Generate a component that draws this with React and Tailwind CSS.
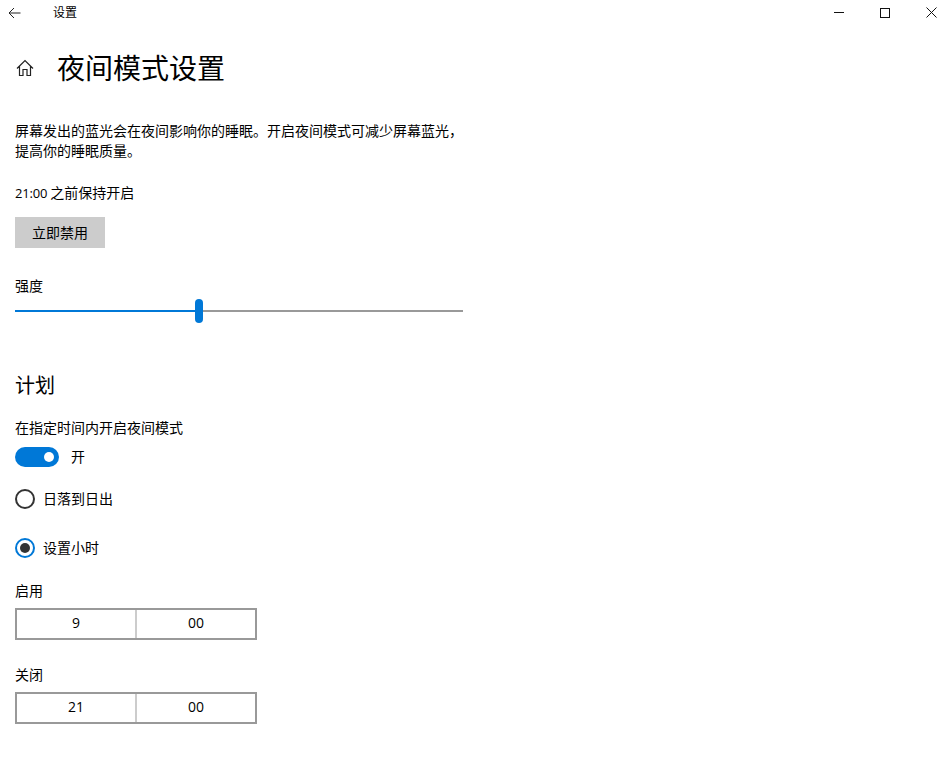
import React from "react";

const font = { fontFamily: '"Open Sans", "Noto Sans CJK SC", sans-serif' };

function TimePicker({ hour, minute }) {
  return (
    <div className="mt-[7px] flex h-[32px] w-[242px] border-2 border-[#999999] text-[14px] leading-[26px]">
      <div className="w-[120px] border-r-2 border-[#cccccc] text-center">{hour}</div>
      <div className="flex-1 text-center">{minute}</div>
    </div>
  );
}

export default function App() {
  return (
    <div className="relative h-[771px] w-[947px] overflow-hidden bg-white text-[14px] text-black" style={font}>
      <div className="flex h-[25px] items-center">
        <div className="flex w-[53px] justify-start pl-[8px]">
          <svg width="13" height="12" viewBox="0 0 13 12" fill="none" stroke="#222" strokeWidth="1">
            <path d="M12.5 6H1M6 1 1 6l5 5" />
          </svg>
        </div>
        <div className="text-[12px] leading-[25px]">设置</div>
        <div className="ml-auto flex items-center">
          <div className="flex w-[46px] justify-center">
            <div className="h-px w-[10px] bg-[#111]" />
          </div>
          <div className="flex w-[46px] justify-center">
            <div className="h-[10px] w-[10px] border border-[#111]" />
          </div>
          <div className="flex w-[39px] justify-start pl-[18px]">
            <svg width="11" height="11" viewBox="0 0 11 11" stroke="#111" strokeWidth="1">
              <path d="M.5.5l10 10M10.5.5l-10 10" />
            </svg>
          </div>
        </div>
      </div>

      <div className="flex h-[60px] items-center pl-[16px] pt-[26px]">
        <svg width="18" height="18" viewBox="0 0 18 18" fill="none" stroke="#222" strokeWidth="1.2">
          <path d="M1 9.5 9 1.5l8 8M3.5 7.5v9h3.5v-6h4v6h3.5v-9" />
        </svg>
        <div className="ml-[23px] text-[28px] leading-[40px]">夜间模式设置</div>
      </div>

      <div className="px-[15px]">
        <p className="mt-[36px] w-[460px] text-[14px] leading-[20px]">
          屏幕发出的蓝光会在夜间影响你的睡眠。开启夜间模式可减少屏幕蓝光，
          <br />
          提高你的睡眠质量。
        </p>
        <div className="mt-[22px] text-[14px] leading-[20px]">
          <span className="text-[13px] tracking-[-0.2px]">21:00 </span>之前保持开启
        </div>
        <button className="mt-[14px] block h-[31px] w-[90px] bg-[#cccccc] text-[14px]">立即禁用</button>

        <div className="mt-[28px] text-[14px] leading-[20px]">强度</div>
        <div className="mt-[3px] flex h-[24px] w-[448px] items-center">
          <div className="h-[2px] w-[180px] bg-[#0078d7]" />
          <div className="h-[24px] w-[8px] rounded-full bg-[#0078d7]" />
          <div className="h-[2px] flex-1 bg-[#999999]" />
        </div>

        <div className="mt-[49px] text-[20px] leading-[28px]">计划</div>
        <div className="mt-[18px] text-[14px] leading-[20px]">在指定时间内开启夜间模式</div>

        <div className="mt-[9px] flex h-[20px] items-center">
          <div className="flex h-[20px] w-[44px] items-center justify-end rounded-full bg-[#0078d7] pr-[5px]">
            <div className="h-[10px] w-[10px] rounded-full bg-white" />
          </div>
          <div className="ml-[12px] pb-[2px] text-[14px]">开</div>
        </div>

        <div className="mt-[22px] flex h-[20px] items-center">
          <div className="h-[20px] w-[20px] rounded-full border-2 border-[#333333]" />
          <div className="ml-[8px] pb-[2px] text-[14px]">日落到日出</div>
        </div>

        <div className="mt-[29px] flex h-[20px] items-center">
          <div className="flex h-[20px] w-[20px] items-center justify-center rounded-full border-2 border-[#0078d7]">
            <div className="h-[10px] w-[10px] rounded-full bg-[#333333]" />
          </div>
          <div className="ml-[8px] pb-[2px] text-[14px]">设置小时</div>
        </div>

        <div className="mt-[23px] text-[14px] leading-[20px]">启用</div>
        <TimePicker hour="9" minute="00" />

        <div className="mt-[25px] text-[14px] leading-[20px]">关闭</div>
        <TimePicker hour="21" minute="00" />
      </div>
    </div>
  );
}
